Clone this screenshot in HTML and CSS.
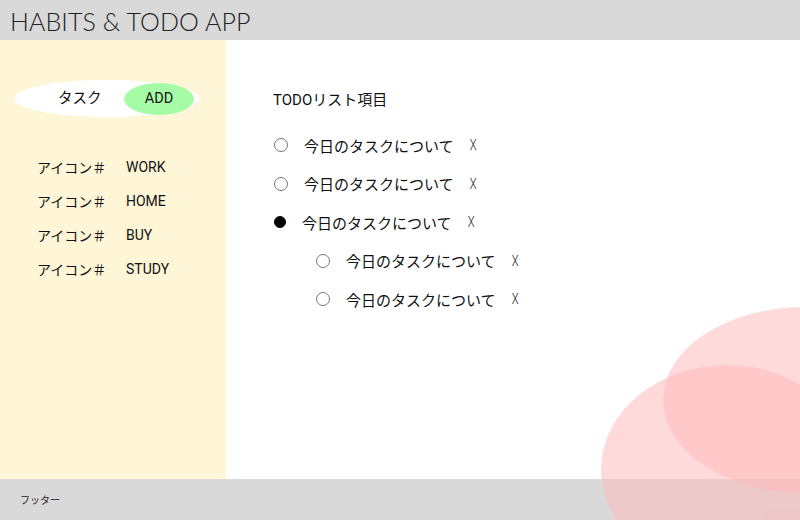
FILE: index.html
```html
<!DOCTYPE html>
<html lang="ja">
<head>
<meta charset="utf-8">
<link rel="stylesheet" href="styles.css">
</head>
<body>
<header class="header">HABITS &amp; TODO APP</header>
<div class="layout">
  <aside class="sidebar">
    <div class="pill">
      <span class="pill-label">タスク</span>
      <span class="pill-btn">ADD</span>
    </div>
    <ul class="cats">
      <li class="cat"><span class="cat-icon">アイコン＃</span><span>WORK</span></li>
      <li class="cat"><span class="cat-icon">アイコン＃</span><span>HOME</span></li>
      <li class="cat"><span class="cat-icon">アイコン＃</span><span>BUY</span></li>
      <li class="cat"><span class="cat-icon">アイコン＃</span><span>STUDY</span></li>
    </ul>
  </aside>
  <main class="main">
    <h2 class="title">TODOリスト項目</h2>
    <ul class="todos">
      <li class="todo"><span class="radio"></span><span class="todo-text">今日のタスクについて</span><span class="del">X</span></li>
      <li class="todo"><span class="radio"></span><span class="todo-text">今日のタスクについて</span><span class="del">X</span></li>
      <li class="todo checked"><span class="radio"></span><span class="todo-text">今日のタスクについて</span><span class="del">X</span></li>
      <li class="todo sub"><span class="radio"></span><span class="todo-text">今日のタスクについて</span><span class="del">X</span></li>
      <li class="todo sub"><span class="radio"></span><span class="todo-text">今日のタスクについて</span><span class="del">X</span></li>
    </ul>
  </main>
</div>
<footer class="footer">フッター</footer>
<div class="deco">
  <div class="blob blob-a"></div>
  <div class="blob blob-b"></div>
</div>
</body>
</html>
```
FILE: styles.css
```css
html, body {
  margin: 0;
  padding: 0;
}
body {
  width: 800px;
  height: 520px;
  overflow: hidden;
  position: relative;
  font-family: Roboto, "Noto Sans CJK JP", sans-serif;
  font-size: 14px;
  color: #111;
  background: #fff;
}
.header {
  height: 40px;
  background: #d9d9d9;
  box-sizing: border-box;
  padding-left: 10px;
  padding-top: 2px;
  display: flex;
  align-items: center;
  font-family: Lato, sans-serif;
  font-weight: 300;
  font-size: 25px;
  letter-spacing: 0.1px;
  color: #222;
}
.layout {
  display: flex;
  height: 439px;
}
.sidebar {
  width: 226px;
  background: #fff6d7;
  padding-top: 40px;
  box-sizing: border-box;
}
.pill {
  margin-left: 14px;
  width: 186px;
  height: 37px;
  background: #fff;
  border-radius: 50%;
  display: flex;
  align-items: center;
  justify-content: space-between;
  box-sizing: border-box;
  padding: 0 6px 0 44px;
}
.pill-label {
  font-size: 14.5px;
  margin-top: -4px;
}
.pill-btn {
  width: 70px;
  height: 32px;
  background: #a6fca6;
  border-radius: 50%;
  display: flex;
  align-items: center;
  justify-content: center;
  font-size: 14.5px;
}
.cats {
  list-style: none;
  margin: 33px 0 0;
  padding: 0 0 0 37px;
}
.cat {
  height: 34px;
  display: flex;
  align-items: center;
}
.cat-icon {
  width: 89px;
}
.main {
  flex: 1;
  padding: 50px 0 0 47px;
  box-sizing: border-box;
}
.title {
  margin: 0;
  font-size: 15px;
  font-weight: 400;
  line-height: 20px;
}
.todos {
  list-style: none;
  margin: 16px 0 0;
  padding: 0;
}
.todo {
  height: 38.5px;
  display: flex;
  align-items: center;
  font-size: 15px;
}
.radio {
  width: 14px;
  height: 14px;
  border: 1px solid #777;
  border-radius: 50%;
  margin-left: 1px;
  margin-right: 16px;
  box-sizing: border-box;
}
.todo.checked .radio {
  width: 12px;
  height: 12px;
  background: #000;
  border-color: #000;
  margin-right: 16px;
}
.todo.sub {
  padding-left: 42px;
}
.todo-text {
  width: 165px;
}
.del {
  font-size: 14px;
  font-weight: 300;
  transform: scaleX(0.8);
  color: #222;
}
.footer {
  height: 41px;
  background: #d9d9d9;
  box-sizing: border-box;
  padding-left: 20px;
  display: flex;
  align-items: center;
  font-size: 10px;
  color: #222;
}
.deco {
  position: absolute;
  inset: 0;
  overflow: hidden;
  pointer-events: none;
}
.blob {
  position: absolute;
  border-radius: 50%;
  background: rgba(255, 186, 186, 0.54);
}
.blob-a {
  left: 663px;
  top: 307px;
  width: 284px;
  height: 186px;
}
.blob-b {
  left: 601px;
  top: 365px;
  width: 252px;
  height: 210px;
}
```
